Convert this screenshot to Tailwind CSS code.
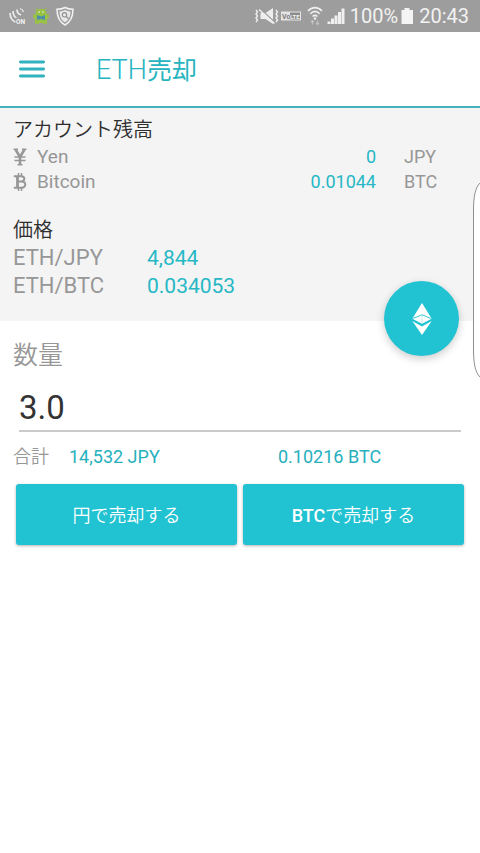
<!DOCTYPE html>
<html lang="ja">
<head>
<meta charset="utf-8">
<meta name="viewport" content="width=device-width, initial-scale=1">
<title>ETH売却</title>
<script src="https://cdn.jsdelivr.net/npm/@tailwindcss/browser@4"></script>
</head>
<body class="relative min-h-screen bg-white text-lg font-normal text-[#979797] font-[Roboto,'Noto_Sans_CJK_JP',sans-serif]">

<!-- Status bar -->
<div class="flex h-8 items-center justify-between bg-[#9d9d9d] pl-2 pr-[11px] text-xl leading-8 text-[#f2f2f2]">
  <div class="flex items-center gap-[6px]">
    <svg class="h-5 w-[18px]" viewBox="0 0 18 20" fill="none" stroke="#ececec" stroke-width="1.7" aria-hidden="true">
      <path d="M2 7c0 5 3 9 8 10M5 5c0 4 2 7 6 8M9 3.500c0 3 1 4.500 4 5.500"/>
      <path d="M12 2.500c2 .5 3 1.500 3.500 3.500" stroke-width="1.200"/>
      <rect x="7.500" y="11.500" width="10.500" height="7" fill="#9d9d9d" stroke="none"/>
      <text x="8" y="18" font-size="6.500" font-weight="700" fill="#f4f4f4" stroke="none" font-family="Roboto">ON</text>
    </svg>
    <svg class="h-5 w-[18px]" viewBox="0 0 18 20" aria-hidden="true">
      <path d="M4 2l2 3M14 2l-2 3" stroke="#94bd45" stroke-width="1.200"/>
      <ellipse cx="9" cy="7" rx="5.500" ry="4.300" fill="#98c146"/>
      <rect x="3" y="8" width="12" height="9" rx="3.500" fill="#98c146"/>
      <rect x="1" y="8" width="3.500" height="4.500" rx="1.700" fill="#98c146"/><rect x="13.500" y="8" width="3.500" height="4.500" rx="1.700" fill="#98c146"/>
      <rect x="3" y="14" width="4" height="4" rx="1.500" fill="#98c146"/><rect x="11" y="14" width="4" height="4" rx="1.500" fill="#98c146"/>
      <circle cx="7" cy="6" r=".8" fill="#eef6dc"/><circle cx="11" cy="6" r=".8" fill="#eef6dc"/>
      <path d="M5 9l4 1.500L13 9v5l-4-1-4 1z" fill="#4d8fa6"/>
    </svg>
    <svg class="h-5 w-[18px]" viewBox="0 0 18 20" fill="none" stroke="#f2f2f2" aria-hidden="true">
      <path d="M9 1.500c2.500 1.300 5 1.800 8 1.800 0 8-2 12.500-8 15.700-6-3.200-8-7.700-8-15.700 3 0 5.500-.5 8-1.800z" stroke-width="1.500"/>
      <path d="M9 4c1.500.8 3.500 1.300 5.500 1.400-.2 5.300-1.700 8.500-5.500 10.800-3.800-2.300-5.300-5.500-5.500-10.800C5.500 5.300 7.500 4.800 9 4z" fill="#e8e8e8" stroke="none"/>
      <circle cx="8.500" cy="8.800" r="2.200" stroke="#8f8f8f" stroke-width="1.100"/><path d="M10.200 10.500l2.300 2.300" stroke="#8f8f8f" stroke-width="1.400"/>
    </svg>
  </div>
  <div class="flex items-center">
    <svg class="h-5 w-[25px]" viewBox="0 0 25 20" fill="none" stroke="#eeeeee" aria-hidden="true">
      <path d="M1 4l1.500 2L1 8l1.500 2L1 12l1.500 2L1 16M21 4l1.500 2L21 8l1.500 2-1.500 2 1.500 2-1.500 2" stroke-width="1.400"/>
      <path d="M5.500 7h5L18 2v16l-7.500-5h-5z" fill="#eeeeee" stroke="none"/>
      <path d="M5 2.500l15 14" stroke="#9d9d9d" stroke-width="1.500"/>
      <path d="M4 3.500l15.500 14" stroke-width="1.500"/>
    </svg>
    <svg class="ml-px h-5 w-5" viewBox="0 0 20 20" aria-hidden="true">
      <rect y="5.500" width="20" height="9" fill="#e4e4e4"/>
      <rect x="9" y="6.500" width="10" height="7" fill="#8c8c8c"/>
      <text x="1" y="12.500" font-size="7" font-weight="700" fill="#7c7c7c" font-family="Roboto">Vo</text>
      <text x="9" y="12.500" font-size="6" font-weight="700" fill="#f0f0f0" font-family="Roboto">LTE</text>
    </svg>
    <svg class="ml-[6px] h-5 w-4" viewBox="0 0 16 20" fill="none" stroke="#f0f0f0" stroke-width="1.600" aria-hidden="true">
      <path d="M1 5c4-4.500 10-4.500 14 0M3.300 7.800c3-3 6.400-3 9.400 0M5.600 10.500c1.600-1.500 3.200-1.500 4.800 0"/>
      <circle cx="8" cy="12.500" r="1.200" fill="#f0f0f0" stroke="none"/>
      <path d="M5.500 18.500v-4M4 16l1.500-1.500L7 16M10.500 14.500v4M9 17l1.500 1.500L12 17" stroke="#c2c2c2" stroke-width="1.200"/>
    </svg>
    <svg class="ml-1 h-5 w-[18px]" viewBox="0 0 18 20" fill="#f0f0f0" aria-hidden="true">
      <path d="M.5 15.500H3.500V18H.5zM4 12.500h3V18H4zM7.500 9.500h3V18h-3zM11 6h3v12h-3zM14.500 2.500h3V18h-3z"/>
    </svg>
    <span class="ml-[5px]">100%</span>
    <svg class="ml-[3px] h-5 w-3" viewBox="0 0 12 20" fill="#f4f4f4" aria-hidden="true"><path d="M3.500 2h5v2H12v14H.5V4h3z"/></svg>
    <span class="ml-[6px]">20:43</span>
  </div>
</div>

<!-- App bar -->
<header class="flex h-[76px] items-center border-b-2 border-[#45b3bd] pl-[19px] text-[#26b4c0]">
  <button type="button" aria-label="メニュー" class="block">
    <svg class="h-5 w-[26px]" viewBox="0 0 26 20" stroke="#30b2bf" stroke-width="2.800" stroke-linecap="round" aria-hidden="true"><path d="M1.400 3h23.200M1.400 10h23.200M1.400 17h23.200"/></svg>
  </button>
  <h1 class="ml-[51px] pt-[2px] text-[27px] leading-8 font-light">ETH<span class="text-[25px] font-normal">売却</span></h1>
</header>

<main>
  <section class="relative bg-[#f4f4f4] px-[13px] pt-[9px] pb-[21px]">
    <h2 class="text-xl leading-[27px] font-[350] text-[#2e2e2e]">アカウント残高</h2>
    <table class="w-full leading-[25px]">
      <tbody>
        <tr>
          <th scope="row" class="p-0 text-left text-[19px] font-normal">
            <span class="flex items-center gap-[10px]">
              <svg class="h-[18px] w-[14px]" viewBox="0 0 14 18" fill="none" stroke="#979797" aria-hidden="true"><path d="M2.500 1.500L7 9l4.500-7.500M7 9v8" stroke-width="2.600"/><path d="M1.500 9h11M1.500 12.500h11" stroke-width="1.600"/><path d="M.5 1.200h4.500M9 1.200h4.500M4.500 16.800h5" stroke-width="1.400"/></svg>Yen
            </span>
          </th>
          <td class="p-0 text-right text-[#26b8c5]">0</td>
          <td class="w-[91px] p-0 pl-7">JPY</td>
        </tr>
        <tr>
          <th scope="row" class="p-0 text-left text-[19px] font-normal">
            <span class="flex items-center gap-[10px]">
              <svg class="h-[18px] w-[14px]" viewBox="0 0 14 18" fill="none" stroke="#979797" aria-hidden="true"><path d="M5.500 0v3M8.500 0v3M5.500 15v3M8.500 15v3" stroke-width="1.500"/><path d="M4.500 3v12" stroke-width="2.800"/><path d="M.8 3.200h7.500c4 0 4 5.300 0 5.300H5M8.500 8.500c5 0 5 6.300 0 6.300H.8" stroke-width="2"/></svg>Bitcoin
            </span>
          </th>
          <td class="p-0 text-right text-[#26b8c5]">0.01044</td>
          <td class="w-[91px] p-0 pl-7">BTC</td>
        </tr>
      </tbody>
    </table>

    <h2 class="mt-[22px] text-xl leading-7 font-[350] text-[#2e2e2e]">価格</h2>
    <table class="leading-[28px]">
      <tbody>
        <tr><th scope="row" class="w-[134px] p-0 text-left text-[22px] font-normal">ETH/JPY</th><td class="p-0 text-[21px] text-[#26b8c5]">4,844</td></tr>
        <tr><th scope="row" class="w-[134px] p-0 text-left text-[22px] font-normal">ETH/BTC</th><td class="p-0 text-[21px] text-[#26b8c5]">0.034053</td></tr>
      </tbody>
    </table>

    <!-- Floating currency button -->
    <button type="button" aria-label="ETH" class="absolute right-[21px] -bottom-[35px] flex size-[75px] items-center justify-center rounded-full bg-[#21c2d1] shadow-[0_3px_8px_rgba(0,0,0,0.2)]">
      <svg class="h-8 w-5" viewBox="0 0 20 32" aria-hidden="true">
        <path d="M10 0L.3 15.800 10 20.800l9.700-5z" fill="#ffffff"/>
        <path d="M.3 18L10 23.400 19.700 18 10 32z" fill="#ffffff"/>
        <path d="M.8 15.500L10 11.800l9.200 3.700" fill="none" stroke="#21c2d1" stroke-width=".9"/>
        <path d="M10 12v9" stroke="#9be2e9" stroke-width=".7"/>
      </svg>
    </button>
  </section>

  <form class="px-[13px] pt-5">
    <label for="amount" class="block text-[25px] leading-[30px] font-[350]">数量</label>
    <div class="mx-[6px] mt-[10px]">
      <input id="amount" type="text" inputmode="decimal" value="3.0" class="block h-[51px] w-full border-b-2 border-[#cbcbcb] bg-transparent p-0 pt-[3px] text-[33px] leading-[44px] text-[#333333] outline-none">
    </div>
    <div class="mt-[11px] flex leading-7">
      <span class="w-14 font-[350]">合計</span>
      <output for="amount" class="flex-1 text-[#26b0bd]">14,532 JPY</output>
      <output for="amount" class="w-[189px] text-[#26b0bd]">0.10216 BTC</output>
    </div>
    <div class="mt-[13px] grid grid-cols-2 gap-[6px] px-[3px] font-medium text-white">
      <button type="button" class="h-[61px] rounded-[3px] bg-[#21c2d1] pt-[2px] shadow-[0_1px_3px_rgba(0,0,0,0.3)]"><span class="font-[350]">円で売却する</span></button>
      <button type="button" class="h-[61px] rounded-[3px] bg-[#21c2d1] pt-[2px] shadow-[0_1px_3px_rgba(0,0,0,0.3)]">BTC<span class="font-[350]">で売却する</span></button>
    </div>
  </form>
</main>

<!-- Edge panel handle -->
<svg class="absolute top-[181px] right-0 h-[198px] w-2" viewBox="0 0 8 198" aria-hidden="true">
  <path d="M8 2C3 7 1.500 16 1.500 30v138c0 14 1.500 23 6.500 28" fill="#ffffff" fill-opacity=".85" stroke="#8e8e8e"/>
</svg>
</body>
</html>
